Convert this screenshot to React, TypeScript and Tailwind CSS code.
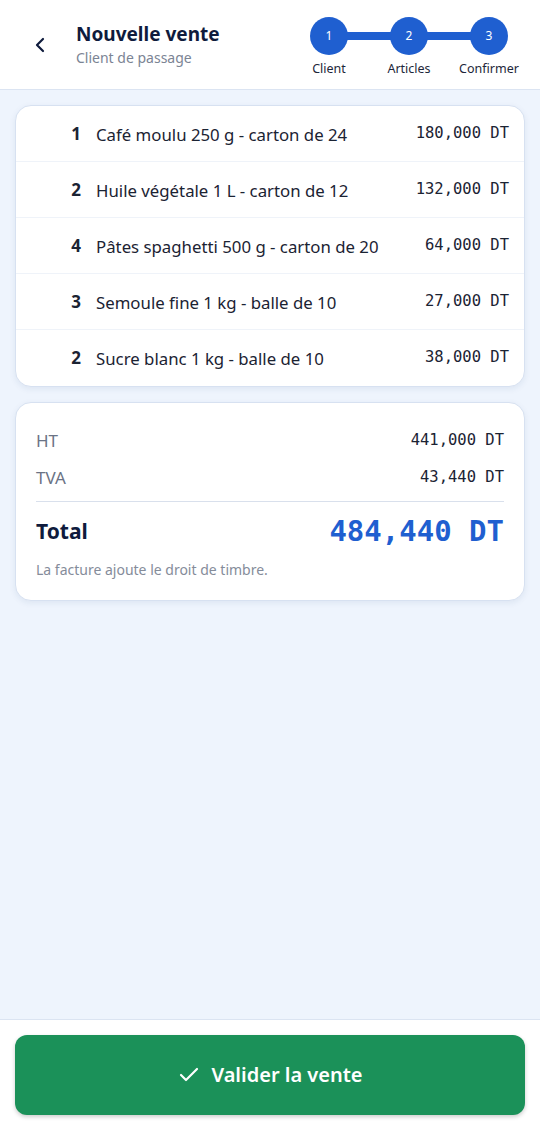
import { Check, ChevronLeft } from "lucide-react";

const items = [
  { qty: 1, name: "Café moulu 250 g - carton de 24", price: "180,000 DT" },
  { qty: 2, name: "Huile végétale 1 L - carton de 12", price: "132,000 DT" },
  { qty: 4, name: "Pâtes spaghetti 500 g - carton de 20", price: "64,000 DT" },
  { qty: 3, name: "Semoule fine 1 kg - balle de 10", price: "27,000 DT" },
  { qty: 2, name: "Sucre blanc 1 kg - balle de 10", price: "38,000 DT" },
];

const steps = ["Client", "Articles", "Confirmer"];

const sans = "font-['Noto_Sans',sans-serif]";
const mono = "font-['DejaVu_Sans_Mono',monospace]";

export default function App() {
  return (
    <div className={`h-[1130px] w-[540px] flex flex-col bg-[#eef4fd] ${sans}`}>
      {/* HEADER */}
      <div className="h-[90px] shrink-0 bg-white border-b border-[#dbe4f2] flex items-start">
        <div className="w-[76px] h-full flex items-center justify-center pl-1">
          <ChevronLeft className="w-6 h-6 text-[#0f1b3d]" strokeWidth={2.2} />
        </div>
        <div className="flex flex-col pt-[21px]">
          <span className="text-[19px] leading-[26px] font-bold text-[#0f1b3d]">
            Nouvelle vente
          </span>
          <span className="text-[14px] leading-[20px] mt-[1px] text-[#7b8494]">
            Client de passage
          </span>
        </div>

        {/* STEPPER */}
        <div className="ml-auto mr-[11px] pt-[17px] w-[240px] flex flex-col">
          <div className="flex items-center px-[21px]">
            {steps.map((s, i) => (
              <div key={s} className="flex items-center">
                <div className="w-[38px] h-[38px] rounded-full bg-[#1f5fd0] text-white text-[12px] flex items-center justify-center">
                  {i + 1}
                </div>
                {i < steps.length - 1 && (
                  <div className="w-[44px] h-[8px] bg-[#1f5fd0] -mx-[1px]" />
                )}
              </div>
            ))}
          </div>
          <div className="flex mt-[6px] text-[12.5px] leading-[16px] text-[#1d2639]">
            {steps.map((s) => (
              <span key={s} className="w-[80px] text-center">
                {s}
              </span>
            ))}
          </div>
        </div>
      </div>

      {/* CONTENT */}
      <div className="flex-1 flex flex-col gap-[15px] px-[15px] pt-[15px]">
        <div className="bg-white rounded-[16px] border border-[#d7e1f1] shadow-[0_2px_6px_rgba(30,60,120,0.08)] overflow-hidden">
          {items.map((it, i) => (
            <div
              key={i}
              className="h-[56px] flex items-center border-b border-[#eff3f9] last:border-b-0 pr-[15px]"
            >
              <span className="w-[65px] text-right text-[17px] font-bold text-[#1b2333]">
                {it.qty}
              </span>
              <span className="ml-[15px] text-[16.8px] text-[#1b2333] mt-[2px]">
                {it.name}
              </span>
              <span className={`ml-auto text-[15.5px] text-[#1b2333] ${mono}`}>
                {it.price}
              </span>
            </div>
          ))}
        </div>

        <div className="bg-white rounded-[16px] border border-[#d7e1f1] shadow-[0_2px_6px_rgba(30,60,120,0.08)] px-[20px] pt-[25px] pb-[20px]">
          <div className="flex items-center justify-between h-[26px]">
            <span className="text-[17px] text-[#6b7385]">HT</span>
            <span className={`text-[15.5px] text-[#1b2333] ${mono}`}>441,000 DT</span>
          </div>
          <div className="flex items-center justify-between h-[26px] mt-[11px]">
            <span className="text-[17px] text-[#6b7385]">TVA</span>
            <span className={`text-[15.5px] text-[#1b2333] ${mono}`}>43,440 DT</span>
          </div>
          <div className="h-px bg-[#d9e0ec] mt-[10px]" />
          <div className="flex items-center justify-between mt-[14px] h-[32px]">
            <span className="text-[21px] font-bold text-[#0f1b3d]">Total</span>
            <span className={`text-[29px] font-bold text-[#1f5fd0] ${mono}`}>
              484,440 DT
            </span>
          </div>
          <p className="mt-[12px] text-[14px] leading-[20px] text-[#858c9a]">
            La facture ajoute le droit de timbre.
          </p>
        </div>
      </div>

      {/* FOOTER */}
      <div className="h-[111px] shrink-0 bg-white border-t border-[#dbe4f2] px-[15px] pt-[15px]">
        <button className="w-full h-[80px] rounded-[12px] bg-[#1b9159] shadow-[0_2px_4px_rgba(0,0,0,0.2)] flex items-center justify-center gap-[10px] text-white">
          <Check className="w-6 h-6" strokeWidth={2.2} />
          <span className="text-[20px] font-semibold">Valider la vente</span>
        </button>
      </div>
    </div>
  );
}
